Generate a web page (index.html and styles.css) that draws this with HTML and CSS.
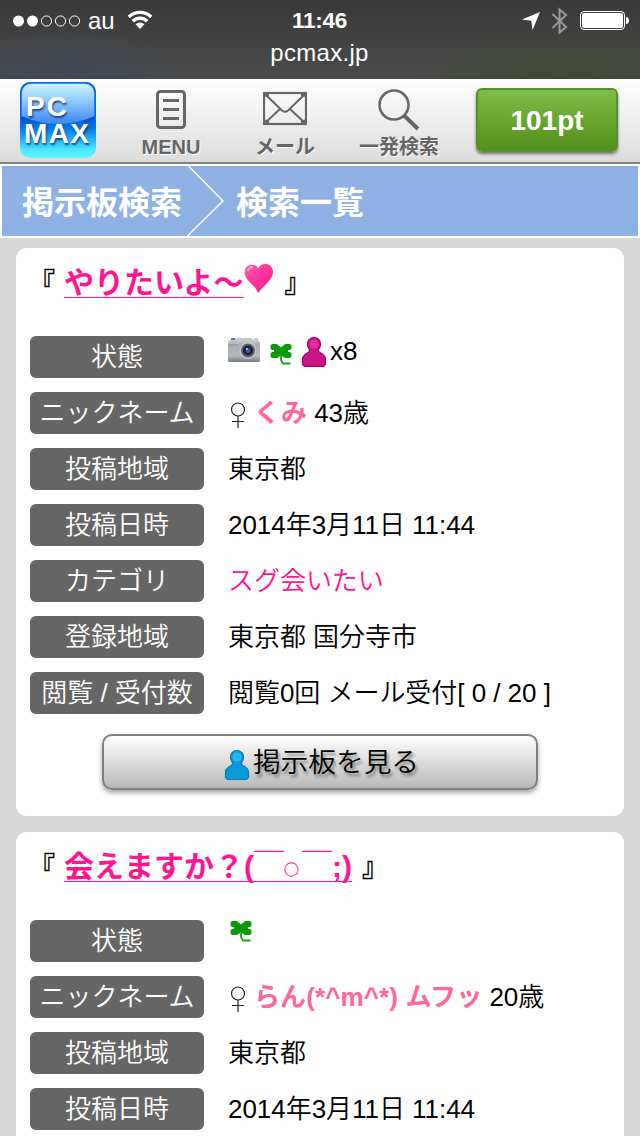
FILE: index.html
```html
<!DOCTYPE html>
<html lang="ja">
<head>
<meta charset="utf-8">
<title>pcmax.jp</title>
<link rel="stylesheet" href="styles.css">
</head>
<body>
<svg class="defs" width="0" height="0" aria-hidden="true">
  <defs>
    <linearGradient id="heartFill" x1="0" y1="0" x2="1" y2="1"><stop offset="0" stop-color="#ff63b8"/><stop offset=".4" stop-color="#ff3aa0"/><stop offset=".7" stop-color="#f32a92"/><stop offset="1" stop-color="#b0105c"/></linearGradient>
    <linearGradient id="camFill" x1="0" y1="0" x2="0" y2="1"><stop offset="0" stop-color="#d2d5d8"/><stop offset=".3" stop-color="#a9afb5"/><stop offset=".75" stop-color="#b5bac0"/><stop offset="1" stop-color="#717983"/></linearGradient>
    <linearGradient id="logoTop" x1="0" y1="0" x2="0" y2="1"><stop offset="0" stop-color="#ccf7ff"/><stop offset=".4" stop-color="#95ceff"/><stop offset="1" stop-color="#3d86f5"/></linearGradient>
    <linearGradient id="logoBottom" x1="0" y1="0" x2="0" y2="1"><stop offset=".45" stop-color="#0048c8"/><stop offset=".65" stop-color="#0988ee"/><stop offset=".88" stop-color="#48e5ff"/><stop offset="1" stop-color="#64f8ff"/></linearGradient>
    <symbol id="clover" viewBox="0 0 24 24">
      <path d="M3 2h5l1 1.500h1l2 2 2-2h1L16 2h5l1.500 1.500v3L21 8h-2v2h2l1.500 1.500v3L21 16h-5l-4-2.500L8 16H3l-1.500-1.500v-3L3 10h2V8H3L1.500 6.500v-3z" fill="#0a9a0a"/>
      <path d="M12 12v6l2 3.500h7.500" fill="none" stroke="#14a614" stroke-width="1.800"/>
    </symbol>
    <symbol id="person" viewBox="0 0 26 32">
      <path d="M13 1.500c-4 0-6.500 3-6.500 6.500 0 3 1 4 2 5.500v2L4 18.500C2 20 1.500 22 1.500 24v4.500l2 2h19l2-2V24c0-2-.5-4-2.500-5.500l-4.500-3v-2c1-1.500 2-2.500 2-5.500 0-3.500-2.500-6.500-6.500-6.500z" stroke-width="1.200"/>
    </symbol>
  </defs>
</svg>

<div class="status">
  <div class="carrier">
    <svg width="68" height="14" viewBox="0 0 68 14" fill="none" stroke="#fff"><circle cx="5.500" cy="7" r="5.500" fill="#fff" stroke="none"/><circle cx="19.500" cy="7" r="5.500" fill="#fff" stroke="none"/><circle cx="33.500" cy="7" r="5.100"/><circle cx="47.500" cy="7" r="5.100"/><circle cx="61.500" cy="7" r="5.100"/></svg>
    <span class="au">au</span>
    <svg class="wifi" width="26" height="20" viewBox="0 0 26 20" fill="none" stroke="#fff" stroke-width="3.300"><path d="M1.800 7a16 16 0 0 1 22.400 0M5.800 11.200a10.300 10.300 0 0 1 14.400 0"/><path d="M8.500 14.200a6.500 6.500 0 0 1 9 0L13 19z" fill="#fff" stroke="none"/></svg>
  </div>
  <div class="clock"><b>11:46</b><span>pcmax.jp</span></div>
  <div class="indicators">
    <svg width="18" height="18" viewBox="0 0 18 18"><path d="M18 0 10.500 18 9.300 8.700 0 7.500z" fill="#fff"/></svg>
    <svg class="bt" width="18" height="28" viewBox="0 0 18 28" fill="none" stroke="#999" stroke-width="2"><path d="M1.500 7 15 20 8.500 25.500V2.500L15 8 1.500 21"/></svg>
    <svg class="battery" width="50" height="20" viewBox="0 0 50 20"><rect x=".5" y=".5" width="44" height="18" rx="3.500" fill="none" stroke="#fff"/><rect x="2" y="2" width="41" height="15" rx="2" fill="#fff"/><path d="M46 6c4 0 4 7 0 7z" fill="#fff"/></svg>
  </div>
</div>

<header class="header">
  <div class="logo">
    <svg width="76" height="76" viewBox="0 0 76 76"><rect width="76" height="76" rx="10" fill="url(#logoBottom)"/><path d="M1 34V11A10 10 0 0 1 11 1h54a10 10 0 0 1 10 10v23Q38 50 1 34z" fill="url(#logoTop)"/><path d="M1 46V11A10 10 0 0 1 11 1h54a10 10 0 0 1 10 10v35" fill="none" stroke="#086cff" stroke-width="1.500"/></svg>
    <div class="logo-text"><span class="pc">PC</span><span class="max">MAX</span></div>
  </div>
  <div class="nav menu">
    <svg width="30" height="40" viewBox="0 0 30 40" fill="none" stroke="#666"><rect x="1.500" y="1.500" width="27" height="36" rx="3" stroke-width="3"/><path d="M7 10.500h16M7 19.500h16M7 28.500h16" stroke-width="3"/></svg>
    <span>MENU</span>
  </div>
  <div class="nav mail">
    <svg width="44" height="40" viewBox="0 0 44 40" fill="none" stroke="#666"><rect x="1" y="4" width="42" height="31" stroke-width="2.200"/><path d="M2 5l17 16.500q3 2.500 6 0L42 5M2 34l15-14M42 34 27 20" stroke-width="2"/><path d="M1 3h5v4L1 8zM43 3h-5v4l5 1zM1 36h5v-4l-5-2zM43 36h-5v-4l5-2z" fill="#666" stroke="none"/></svg>
    <span>メール</span>
  </div>
  <div class="nav search">
    <svg width="42" height="42" viewBox="0 0 42 42" fill="none" stroke="#666"><circle cx="16" cy="16" r="14.500" stroke-width="2.500"/><path d="M26 26.500 40 40" stroke-width="4"/></svg>
    <span>一発検索</span>
  </div>
  <div class="points">101pt</div>
</header>

<nav class="crumbs">
  <span>掲示板検索</span>
  <svg width="38" height="70" viewBox="0 0 38 70" fill="none" stroke="#fff" stroke-width="1.400"><path d="M1.500 0 36 35 .5 70"/></svg>
  <span>検索一覧</span>
</nav>

<main class="list">
  <article class="card">
    <h2 class="title"><span class="br">『</span><a>やりたいよ〜</a><svg class="heart" width="30" height="32" viewBox="0 0 30 32"><path d="M14 5.500C16 2 19 .5 22.500 1c4 .5 6.500 4 6.500 8 0 7-8 12.500-15 21C12 23 2 18 1 12 0 6 2 3 6 2c4-1 6.500 0 8 3.500z" fill="url(#heartFill)"/><path d="M4 8q1-4 5-4" stroke="#ffa0d2" stroke-width="2" fill="none"/></svg><span class="br close">』</span></h2>
    <dl class="rows">
      <div class="row"><dt>状態</dt><dd class="state">
        <svg class="camera" width="32" height="26" viewBox="0 0 32 26"><path d="M2 3h5V1h5v2h14V1h4v3l2 1v19l-1 1H1l-1-1V4z" fill="url(#camFill)"/><path d="M9 3 12 1h11l4 4H9z" fill="#c1c6cb"/><path d="M3 1h4v2H3z" fill="#777"/><path d="M0 8h10M0 22h31" stroke="#8b939c"/><circle cx="20" cy="13.500" r="8.500" fill="#c6c9cc"/><circle cx="20" cy="13.500" r="7" fill="#626469"/><circle cx="20" cy="13.500" r="5" fill="#17233e"/><circle cx="20" cy="13.500" r="2.500" fill="#355e9b"/><circle cx="19" cy="12" r="1" fill="#b5d5ff"/></svg>
        <svg class="clover" width="24" height="24"><use href="#clover"/></svg>
        <svg class="person pink" width="26" height="32"><use href="#person"/><circle cx="13" cy="8" r="4.500" fill="#e42ba2" stroke="none"/></svg><span>x8</span></dd></div>
      <div class="row"><dt>ニックネーム</dt><dd><svg class="female" width="16" height="26" viewBox="0 0 16 26"><path d="M8 14v12M2 19.500h12" /><circle cx="8" cy="7.500" r="6.500"/></svg><b>くみ</b> 43歳</dd></div>
      <div class="row"><dt>投稿地域</dt><dd>東京都</dd></div>
      <div class="row"><dt>投稿日時</dt><dd>2014年3月11日 11:44</dd></div>
      <div class="row"><dt>カテゴリ</dt><dd class="category">スグ会いたい</dd></div>
      <div class="row"><dt>登録地域</dt><dd>東京都 国分寺市</dd></div>
      <div class="row"><dt>閲覧 / 受付数</dt><dd>閲覧0回 メール受付[ 0 / 20 ]</dd></div>
    </dl>
    <div class="view"><svg class="person blue" width="26" height="32"><use href="#person"/><circle cx="13" cy="8" r="4.500" fill="#26baf5" stroke="none"/></svg><span>掲示板を見る</span></div>
  </article>

  <article class="card">
    <h2 class="title second"><span class="br">『</span><a>会えますか？(<span class="face">￣<span class="mouth">○</span>￣</span>;)</a><span class="br close">』</span></h2>
    <dl class="rows">
      <div class="row"><dt>状態</dt><dd class="state alone"><svg class="clover" width="24" height="24"><use href="#clover"/></svg></dd></div>
      <div class="row"><dt>ニックネーム</dt><dd><svg class="female" width="16" height="26" viewBox="0 0 16 26"><path d="M8 14v12M2 19.500h12" /><circle cx="8" cy="7.500" r="6.500"/></svg><b class="long">らん(*^m^*) ムフッ</b> 20歳</dd></div>
      <div class="row"><dt>投稿地域</dt><dd>東京都</dd></div>
      <div class="row"><dt>投稿日時</dt><dd>2014年3月11日 11:44</dd></div>
    </dl>
  </article>
</main>
</body>
</html>
```
FILE: styles.css
```css
* { box-sizing: border-box; }
html, body { margin: 0; height: 1136px; overflow: hidden; }
body {
  width: 640px;
  background: #d8d8d8;
  color: #000;
  font-family: "Liberation Sans", "Noto Sans CJK JP", sans-serif;
  font-size: 26px;
  display: flex;
  flex-direction: column;
}
svg { display: block; flex: none; }
.defs { position: absolute; }

.status {
  flex: none;
  height: 79px;
  padding: 0 11px 0 13px;
  color: #fff;
  background:
    radial-gradient(ellipse 150px 50px at 560px 79px, #3f4930 0%, transparent 100%),
    radial-gradient(ellipse 130px 50px at 65px 79px, #3f4856 0%, transparent 100%),
    linear-gradient(#393939, #4b4b4b);
  display: grid;
  grid-template-columns: 200px 1fr 200px;
}
.carrier { display: flex; align-items: center; height: 41px; }
.au { font-size: 24px; margin-left: 7px; }
.wifi { margin-left: 12px; margin-top: -1px; }
.clock { display: flex; flex-direction: column; align-items: center; padding-right: 3px; }
.clock b { font-size: 22.500px; line-height: 30px; padding-top: 6px; letter-spacing: -.3px; }
.clock span { font-size: 24px; line-height: 30px; padding-top: 2px; letter-spacing: .3px; }
.indicators { display: flex; justify-content: flex-end; align-items: center; height: 41px; }
.bt { margin-left: 11px; }
.battery { margin-left: 11px; margin-right: -1px; }

.header {
  flex: none;
  height: 85px;
  border-bottom: 2px solid #808080;
  background: linear-gradient(#fff, #dcdcdc);
  display: flex;
  align-items: flex-start;
  padding: 3px 22px 0 20px;
}
.logo { display: grid; width: 76px; height: 76px; }
.logo > * { grid-area: 1 / 1; }
.logo-text {
  z-index: 1;
  display: flex;
  flex-direction: column;
  padding: 11px 0 0 4px;
  color: #fff;
  font-weight: bold;
  font-size: 28px;
  line-height: 27px;
  text-shadow: 1px 2px 2px rgba(0, 30, 90, .7);
}
.pc { padding-left: 2px; letter-spacing: 2px; }
.max { letter-spacing: 1.400px; }
.nav {
  display: flex;
  flex-direction: column;
  align-items: center;
  color: #666;
  font-weight: bold;
  font-size: 20px;
  line-height: 24px;
  text-shadow: 1px 1px 0 #fff;
  white-space: nowrap;
}
.menu { width: 60px; margin-left: 45px; padding-top: 8px; }
.menu span { padding-top: 5px; }
.mail { width: 60px; margin-left: 54px; padding-top: 7px; }
.mail span { padding-top: 6px; }
.search { width: 80px; margin-left: 44px; padding-top: 7px; }
.search span { padding-top: 4px; }
.points {
  margin: 6px 0 0 auto;
  width: 142px;
  height: 64px;
  border: 2px solid #55912a;
  border-radius: 6px;
  background: linear-gradient(#80bd48, #51901b);
  box-shadow: 0 2px 3px rgba(0, 0, 0, .5);
  color: #fff;
  font-weight: bold;
  font-size: 28px;
  line-height: 61px;
  text-align: center;
}

.crumbs {
  flex: none;
  height: 74px;
  border: 2px solid #fff;
  background: #8eb2e3;
  color: #fff;
  font-weight: bold;
  font-size: 32px;
  line-height: 74px;
  display: flex;
  padding-left: 20px;
}
.crumbs svg { margin: 0 11px 0 5px; }

.list { flex: 1; min-height: 0; overflow: hidden; display: flex; flex-direction: column; gap: 16px; padding: 10px 16px 0; }
.card { flex: none; height: 568px; border-radius: 11px; background: #fff; padding: 14px 14px 0; }
.card:last-child { height: 304px; border-radius: 11px 11px 0 0; }
.title { margin: 0; height: 74px; font-size: 30px; font-weight: normal; line-height: 42px; display: flex; white-space: nowrap; }
.title a { color: #ff1493; font-weight: bold; text-decoration: underline; text-decoration-thickness: 1px; text-underline-offset: 4px; text-decoration-skip-ink: none; }
.br { font-size: 26px; width: 34px; margin: 0 1px 0 -1px; font-weight: 500; -webkit-text-stroke: .4px #000; }
.close { margin-left: 11px; }
.heart { margin: 1px -1px 0 1px; }
.face { font-family: "Noto Sans CJK JP", sans-serif; font-weight: normal; line-height: 1; }
.mouth { font-size: 15px; letter-spacing: 3px; vertical-align: 2px; line-height: 1; -webkit-text-stroke: .3px #ff1493; }
.title.second { line-height: 42px; }
.second .close { margin-left: 10px; }

.rows { margin: 0; display: flex; flex-direction: column; gap: 14px; }
.row { display: flex; height: 42px; line-height: 42px; white-space: nowrap; }
.row dt { width: 174px; border-radius: 6px; background: #666; color: #fff; text-align: center; font-weight: 350; }
.row dd { margin: 0 0 0 24px; display: block; font-weight: 350; letter-spacing: -.04px; }
.row b { color: #ff6699; }
.row .long { letter-spacing: .12px; }
.row .category { color: #ff1493; }
.row .state { display: flex; }
.state span { line-height: 31px; padding-left: 3px; }
.camera { margin-top: 1px; }
.state .clover { margin: 6px 8px 0 9px; }
.state.alone .clover { margin: -1px 0 0 1px; }
.pink { fill: #c7158a; stroke: #a9005d; }
.blue { fill: #0799d8; stroke: #087dad; }
.female { display: inline-block; vertical-align: -6px; margin: 0 8px 0 2px; fill: none; stroke: #222; stroke-width: 1.200; }

.view {
  height: 56px;
  margin: 20px 72px 0;
  border: 2px solid #808080;
  border-radius: 10px;
  background: linear-gradient(#fff, #b8b8b8);
  box-shadow: 0 3px 5px rgba(0, 0, 0, .35);
  font-size: 27.700px;
  font-weight: 350;
  line-height: 54px;
  text-shadow: 2px 3px 3px rgba(0, 0, 0, .4);
  display: flex;
  justify-content: center;
  padding-left: 3px;
}
.view svg { margin: 13px 3px 0 0; }
```
